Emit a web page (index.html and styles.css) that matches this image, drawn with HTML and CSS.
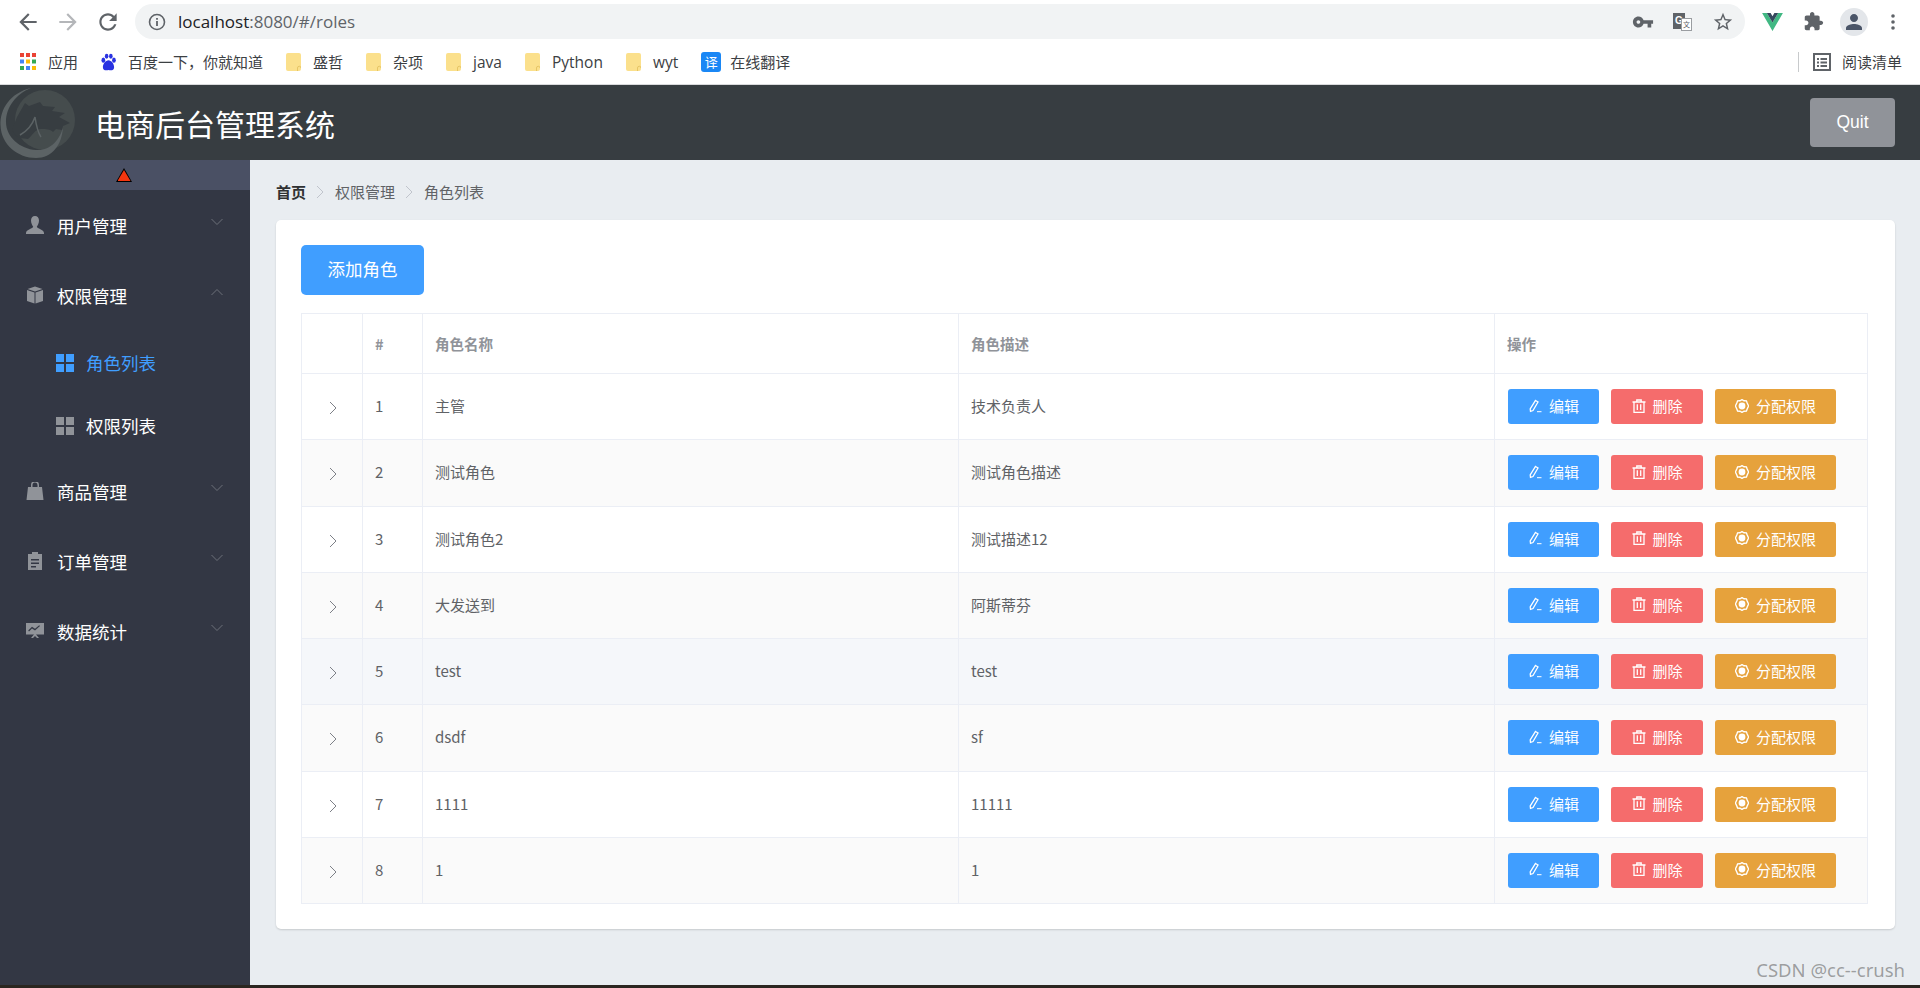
FILE: index.html
```html
<!DOCTYPE html>
<html lang="en">
<head>
    <meta charset="UTF-8">
    <meta name="viewport" content="width=device-width, initial-scale=1.0">
    <title>电商后台管理系统</title>
    <link rel="stylesheet" href="styles.css">
</head>
<body>

<svg class="sprite" aria-hidden="true">
    <symbol id="i-folder" viewBox="0 0 15 18"><path d="M2 0h11a2 2 0 0 1 2 2v14a2 2 0 0 1-2 2H2a2 2 0 0 1-2-2V2a2 2 0 0 1 2-2z" fill="#fbe08c"/><path d="M11.500 18v-3a1.700 1.700 0 0 1 3.500 0" fill="none" stroke="#e6c565"/></symbol>
    <symbol id="i-down" viewBox="0 0 12 8"><path d="M.5 1l5.500 5.500L11.500 1" fill="none" stroke="#6d7079" stroke-width="1"/></symbol>
    <symbol id="i-up" viewBox="0 0 12 8"><path d="M.5 7L6 1.500 11.500 7" fill="none" stroke="#6d7079" stroke-width="1"/></symbol>
    <symbol id="i-grid" viewBox="0 0 18 18"><path d="M0 0h8v8H0zM10 0h8v8h-8zM0 10h8v8H0zM10 10h8v8h-8z" fill="currentColor"/></symbol>
    <symbol id="i-right" viewBox="0 0 8 14"><path d="M1 1l6 6-6 6" fill="none" stroke="currentColor"/></symbol>
    <symbol id="i-edit" viewBox="0 0 14 14"><path d="M7.500 1.500l2.500 1.500-5 8.500-2.500.8-.3-2.500z" fill="none" stroke="#fff" stroke-width="1.300"/><path d="M9 12.700h4.500" stroke="#fff"/></symbol>
    <symbol id="i-trash" viewBox="0 0 14 14"><path d="M.5 3h13M4.800 3V1h4.400v2M2 3v10.300h10V3M5.300 5.300v5.700M8.700 5.300v5.700" fill="none" stroke="#fff" stroke-width="1.300"/></symbol>
    <symbol id="i-gear" viewBox="0 0 14 14"><path d="M7 .6l2 1.200 2.400.1.800 2.100L13.600 7l-1.400 3-.8 2.100-2.400.1L7 13.400l-2-1.200-2.400-.1-.8-2.100L.4 7l1.400-3 .8-2.100 2.400-.1z" fill="none" stroke="#fff" stroke-width="1.400"/><circle cx="7" cy="7" r="3.400" fill="#fff"/></symbol>
</svg>

<div class="browser-bar">
    <div class="nav-row">
        <svg class="nav-icon" viewBox="0 0 24 24"><path d="M20 11H7.830l5.590-5.590L12 4l-8 8 8 8 1.410-1.410L7.830 13H20v-2z" fill="#5f6368"/></svg>
        <svg class="nav-icon" viewBox="0 0 24 24"><path d="M4 11h12.170l-5.590-5.590L12 4l8 8-8 8-1.410-1.410L16.170 13H4v-2z" fill="#b4b6b9"/></svg>
        <svg class="nav-icon" viewBox="0 0 24 24"><path d="M17.650 6.350C16.200 4.900 14.210 4 12 4c-4.420 0-7.990 3.580-7.990 8s3.570 8 7.990 8c3.730 0 6.840-2.550 7.730-6h-2.080c-.82 2.330-3.040 4-5.650 4-3.310 0-6-2.690-6-6s2.690-6 6-6c1.660 0 3.140.69 4.220 1.780L13 11h7V4l-2.350 2.350z" fill="#5f6368"/></svg>
        <div class="url-pill">
            <svg class="info-icon" viewBox="0 0 18 18"><circle cx="9" cy="9" r="7.500" fill="none" stroke="#5f6368" stroke-width="1.600"/><path d="M8.100 8h1.800v5H8.100zM8.100 5h1.800v1.800H8.100z" fill="#5f6368"/></svg>
            <span class="url-text">localhost<span class="url-dim">:8080/#/roles</span></span>
            <svg class="pill-icon key" viewBox="0 0 24 24"><path d="M12.650 10C11.830 7.670 9.610 6 7 6c-3.310 0-6 2.690-6 6s2.690 6 6 6c2.610 0 4.830-1.670 5.650-4H17v4h4v-4h2v-4H12.650zM7 14c-1.100 0-2-.9-2-2s.9-2 2-2 2 .9 2 2-.9 2-2 2z" fill="#5f6368"/></svg>
            <div class="translate-icon"><span class="g-box">G</span><span class="x-box">文</span></div>
            <svg class="pill-icon star" viewBox="0 0 24 24"><path d="M22 9.240l-7.190-.62L12 2 9.190 8.630 2 9.240l5.460 4.730L5.820 21 12 17.270 18.180 21l-1.630-7.030L22 9.240zM12 15.400l-3.760 2.270 1-4.280-3.320-2.880 4.380-.38L12 6.100l1.710 4.040 4.380.38-3.320 2.880 1 4.280L12 15.400z" fill="#5f6368"/></svg>
        </div>
        <svg class="vue-icon" viewBox="0 0 22 19"><path d="M0 0h5l6 10L17 0h5L11 19z" fill="#41b883"/><path d="M5 0h4l2 3.500L13 0h4l-6 10z" fill="#35495e"/></svg>
        <svg class="puzzle-icon" viewBox="0 0 24 24"><path d="M20.500 11H19V7c0-1.100-.9-2-2-2h-4V3.500C13 2.120 11.880 1 10.500 1S8 2.120 8 3.500V5H4c-1.100 0-1.990.9-1.990 2v3.800H3.500c1.490 0 2.700 1.210 2.700 2.700s-1.210 2.700-2.700 2.700H2V20c0 1.100.9 2 2 2h3.800v-1.500c0-1.490 1.210-2.700 2.700-2.700 1.490 0 2.700 1.210 2.700 2.700V22H17c1.100 0 2-.9 2-2v-4h1.500c1.380 0 2.500-1.120 2.500-2.500S21.880 11 20.500 11z" fill="#5f6368"/></svg>
        <div class="avatar">
            <svg viewBox="0 0 24 24"><path d="M12 12c2.210 0 4-1.790 4-4s-1.790-4-4-4-4 1.790-4 4 1.790 4 4 4zm0 2c-2.670 0-8 1.340-8 4v2h16v-2c0-2.660-5.330-4-8-4z" fill="#4a5568"/></svg>
        </div>
        <svg class="dots-icon" viewBox="0 0 4 18"><circle cx="2" cy="3" r="1.800" fill="#5f6368"/><circle cx="2" cy="9" r="1.800" fill="#5f6368"/><circle cx="2" cy="15" r="1.800" fill="#5f6368"/></svg>
    </div>
    <div class="bookmark-row">
        <div class="bookmark">
            <svg class="apps-icon" viewBox="0 0 16 17">
                <path d="M0 0h4v4H0z" fill="#ea4335"/><path d="M6 0h4v4H6z" fill="#ea4335"/><path d="M12 0h4v4h-4z" fill="#ea4335"/>
                <path d="M0 6.500h4v4H0z" fill="#4285f4"/><path d="M6 6.500h4v4H6z" fill="#fbbc05"/><path d="M12 6.500h4v4h-4z" fill="#34a853"/>
                <path d="M0 13h4v4H0z" fill="#34a853"/><path d="M6 13h4v4H6z" fill="#4285f4"/><path d="M12 13h4v4h-4z" fill="#fbbc05"/>
            </svg>
            <span>应用</span>
        </div>
        <div class="bookmark">
            <svg class="paw-icon" viewBox="0 0 16 18" fill="#2932e1"><ellipse cx="2.500" cy="7" rx="2" ry="2.700"/><ellipse cx="6" cy="2.800" rx="1.900" ry="2.600"/><ellipse cx="10.500" cy="2.800" rx="1.900" ry="2.600"/><ellipse cx="13.800" cy="7" rx="2" ry="2.700"/><path d="M8 7c3 0 6 4 6 7.500 0 4-4 3.500-6 3-2 .5-6 1-6-3C2 11 5 7 8 7z"/></svg>
            <span>百度一下，你就知道</span>
        </div>
        <div class="bookmark"><svg class="folder-icon"><use href="#i-folder"/></svg><span>盛哲</span></div>
        <div class="bookmark"><svg class="folder-icon"><use href="#i-folder"/></svg><span>杂项</span></div>
        <div class="bookmark"><svg class="folder-icon"><use href="#i-folder"/></svg><span class="latin">java</span></div>
        <div class="bookmark"><svg class="folder-icon"><use href="#i-folder"/></svg><span class="latin">Python</span></div>
        <div class="bookmark"><svg class="folder-icon"><use href="#i-folder"/></svg><span class="latin">wyt</span></div>
        <div class="bookmark">
            <div class="fanyi-icon">译</div>
            <span>在线翻译</span>
        </div>
        <div class="reading-list">
            <svg class="list-icon" viewBox="0 0 18 18"><rect x="1" y="1" width="16" height="16" fill="none" stroke="#5f6368" stroke-width="2"/><path d="M4 5h2v2H4zM7.500 5H14v2H7.500zM4 8.500h2v2H4zM7.500 8.500H14v2H7.500zM4 12h2v2H4zM7.500 12H14v2H7.500z" fill="#5f6368"/></svg>
            <span>阅读清单</span>
        </div>
    </div>
</div>

<header class="app-header">
    <svg class="logo" viewBox="0 0 76 75">
        <circle cx="45" cy="35" r="30" fill="#454c4d"/>
        <path d="M31 3C10 8 0 24 .5 40 1 60 18 73 36 73c16 0 26-13 27-31-3 13-13 24-27 23C20 64 6 52 6 37 6 22 16 9 31 3z" fill="#5c6365"/>
        <path d="M12 45l5-13 8-14 4 3 11-4 3 4 12 1-3 4 13 2-6 4 11 6-7 3-1 4-6-1-3 3c-3-3-7-3-12-3-6 0-9 7-13 10l-8-1c-3-1-5-3-8-8z" fill="#373d41"/>
        <path d="M20 50c7-4 12-9 15-18 1 7 2 14 6 20" fill="none" stroke="#5c6365" stroke-width="1.500"/>
    </svg>
    <h1 class="app-title">电商后台管理系统</h1>
    <button class="quit-btn">Quit</button>
</header>

<div class="app-body">
    <aside class="sidebar">
        <div class="toggle-bar"><span class="toggle-arrow"></span></div>
        <ul class="menu">
            <li class="menu-item">
                <svg class="menu-icon" viewBox="0 0 18 18"><path d="M9 0c2.500 0 4 2 4 4.500S11.500 10 10.800 10.800c0 1.500 7.200 3 7.200 6.200v1H0v-1c0-3.200 7.200-4.700 7.200-6.200C6.500 10 5 7 5 4.500S6.500 0 9 0z"/></svg>
                <span class="menu-text">用户管理</span>
                <svg class="menu-arrow"><use href="#i-down"/></svg>
            </li>
            <li class="menu-item">
                <svg class="menu-icon" viewBox="0 0 18 18"><path d="M9 .5l7.500 2.500L9 5.500 1.500 3zM1 4l7.500 2.500V17.500L1 15zM17 4L9.500 6.500V17.500L17 15z"/></svg>
                <span class="menu-text">权限管理</span>
                <svg class="menu-arrow"><use href="#i-up"/></svg>
            </li>
            <li class="sub-item active">
                <svg class="sub-icon"><use href="#i-grid"/></svg>
                <span>角色列表</span>
            </li>
            <li class="sub-item">
                <svg class="sub-icon"><use href="#i-grid"/></svg>
                <span>权限列表</span>
            </li>
            <li class="menu-item">
                <svg class="menu-icon" viewBox="0 0 18 18"><path d="M5 5V3a4 4 0 0 1 8 0v2h3l1.500 13H.5L2 5zm1.500 0h5V3a2.500 2.500 0 0 0-5 0z"/></svg>
                <span class="menu-text">商品管理</span>
                <svg class="menu-arrow"><use href="#i-down"/></svg>
            </li>
            <li class="menu-item">
                <svg class="menu-icon" viewBox="0 0 18 18"><path d="M6 2V0h6v2h4v16H2V2zM5 7v1.500h8V7zm0 3.500V12h8v-1.500zM5 14v1.500h5V14z"/></svg>
                <span class="menu-text">订单管理</span>
                <svg class="menu-arrow"><use href="#i-down"/></svg>
            </li>
            <li class="menu-item">
                <svg class="menu-icon" viewBox="0 0 18 18"><path d="M0 1h18v11.500H10l3 3.500h-2l-2-2-2 2H5l3-3.500H0zM3 9.500l3-3 3 2 5-4.500-.8-.8L9 6.800l-3-2-3.800 3.800z" fill-rule="evenodd"/></svg>
                <span class="menu-text">数据统计</span>
                <svg class="menu-arrow"><use href="#i-down"/></svg>
            </li>
        </ul>
    </aside>

    <main class="main">
        <div class="breadcrumb">
            <span class="crumb-home">首页</span>
            <svg class="crumb-sep"><use href="#i-right"/></svg>
            <span>权限管理</span>
            <svg class="crumb-sep"><use href="#i-right"/></svg>
            <span>角色列表</span>
        </div>

        <section class="card">
            <button class="add-btn">添加角色</button>
            <table class="role-table">
                <colgroup>
                    <col class="col-expand">
                    <col class="col-index">
                    <col class="col-text">
                    <col class="col-text">
                    <col>
                </colgroup>
                <thead>
                    <tr><th></th><th>#</th><th>角色名称</th><th>角色描述</th><th>操作</th></tr>
                </thead>
                <tbody>
                    <tr>
                        <td class="expand"><svg class="row-arrow"><use href="#i-right"/></svg></td>
                        <td>1</td><td>主管</td><td>技术负责人</td>
                        <td class="action-cell"><div class="actions">
                            <button class="act blue"><svg><use href="#i-edit"/></svg>编辑</button>
                            <button class="act red"><svg><use href="#i-trash"/></svg>删除</button>
                            <button class="act orange"><svg><use href="#i-gear"/></svg>分配权限</button>
                        </div></td>
                    </tr>
                    <tr>
                        <td class="expand"><svg class="row-arrow"><use href="#i-right"/></svg></td>
                        <td>2</td><td>测试角色</td><td>测试角色描述</td>
                        <td class="action-cell"><div class="actions">
                            <button class="act blue"><svg><use href="#i-edit"/></svg>编辑</button>
                            <button class="act red"><svg><use href="#i-trash"/></svg>删除</button>
                            <button class="act orange"><svg><use href="#i-gear"/></svg>分配权限</button>
                        </div></td>
                    </tr>
                    <tr>
                        <td class="expand"><svg class="row-arrow"><use href="#i-right"/></svg></td>
                        <td>3</td><td>测试角色2</td><td>测试描述12</td>
                        <td class="action-cell"><div class="actions">
                            <button class="act blue"><svg><use href="#i-edit"/></svg>编辑</button>
                            <button class="act red"><svg><use href="#i-trash"/></svg>删除</button>
                            <button class="act orange"><svg><use href="#i-gear"/></svg>分配权限</button>
                        </div></td>
                    </tr>
                    <tr>
                        <td class="expand"><svg class="row-arrow"><use href="#i-right"/></svg></td>
                        <td>4</td><td>大发送到</td><td>阿斯蒂芬</td>
                        <td class="action-cell"><div class="actions">
                            <button class="act blue"><svg><use href="#i-edit"/></svg>编辑</button>
                            <button class="act red"><svg><use href="#i-trash"/></svg>删除</button>
                            <button class="act orange"><svg><use href="#i-gear"/></svg>分配权限</button>
                        </div></td>
                    </tr>
                    <tr class="hover">
                        <td class="expand"><svg class="row-arrow"><use href="#i-right"/></svg></td>
                        <td>5</td><td>test</td><td>test</td>
                        <td class="action-cell"><div class="actions">
                            <button class="act blue"><svg><use href="#i-edit"/></svg>编辑</button>
                            <button class="act red"><svg><use href="#i-trash"/></svg>删除</button>
                            <button class="act orange"><svg><use href="#i-gear"/></svg>分配权限</button>
                        </div></td>
                    </tr>
                    <tr>
                        <td class="expand"><svg class="row-arrow"><use href="#i-right"/></svg></td>
                        <td>6</td><td>dsdf</td><td>sf</td>
                        <td class="action-cell"><div class="actions">
                            <button class="act blue"><svg><use href="#i-edit"/></svg>编辑</button>
                            <button class="act red"><svg><use href="#i-trash"/></svg>删除</button>
                            <button class="act orange"><svg><use href="#i-gear"/></svg>分配权限</button>
                        </div></td>
                    </tr>
                    <tr>
                        <td class="expand"><svg class="row-arrow"><use href="#i-right"/></svg></td>
                        <td>7</td><td>1111</td><td>11111</td>
                        <td class="action-cell"><div class="actions">
                            <button class="act blue"><svg><use href="#i-edit"/></svg>编辑</button>
                            <button class="act red"><svg><use href="#i-trash"/></svg>删除</button>
                            <button class="act orange"><svg><use href="#i-gear"/></svg>分配权限</button>
                        </div></td>
                    </tr>
                    <tr>
                        <td class="expand"><svg class="row-arrow"><use href="#i-right"/></svg></td>
                        <td>8</td><td>1</td><td>1</td>
                        <td class="action-cell"><div class="actions">
                            <button class="act blue"><svg><use href="#i-edit"/></svg>编辑</button>
                            <button class="act red"><svg><use href="#i-trash"/></svg>删除</button>
                            <button class="act orange"><svg><use href="#i-gear"/></svg>分配权限</button>
                        </div></td>
                    </tr>
                </tbody>
            </table>
        </section>
    </main>
</div>

<div class="taskbar-edge"></div>
<div class="watermark">CSDN @cc--crush</div>

</body>
</html>
```

FILE: styles.css
```css
* {
    box-sizing: border-box;
}

html, body {
    margin: 0;
    height: 988px;
    overflow: hidden;
}

body {
    position: relative;
    display: flex;
    flex-direction: column;
    font-family: "Liberation Sans", "Noto Sans CJK SC", sans-serif;
    background: #e9edf1;
}

.sprite {
    display: none;
}

/* browser chrome */
.browser-bar {
    height: 85px;
    flex-shrink: 0;
    background: #fff;
    border-bottom: 1px solid #d9dadc;
}

.nav-row {
    display: flex;
    align-items: center;
    height: 42px;
    padding: 1px 0 0 15px;
}

.nav-icon {
    width: 26px;
    height: 26px;
    margin-right: 14px;
    flex-shrink: 0;
}

.url-pill {
    display: flex;
    align-items: center;
    width: 1610px;
    height: 35px;
    margin-left: 0;
    padding-left: 13px;
    background: #f1f3f4;
    border-radius: 18px;
}

.info-icon {
    width: 18px;
    height: 18px;
}

.url-text {
    margin-left: 12px;
    font-family: "Open Sans", sans-serif;
    font-size: 17px;
    color: #202124;
}

.url-dim {
    color: #5f6368;
}

.pill-icon {
    width: 22px;
    height: 22px;
}

.key {
    margin-left: auto;
}

.translate-icon {
    position: relative;
    width: 19px;
    height: 18px;
    margin: 0 20px 0 19px;
    font-size: 10px;
    font-weight: bold;
}

.g-box {
    position: absolute;
    left: 0;
    top: 0;
    width: 12px;
    height: 16px;
    background: #5f6368;
    color: #fff;
    text-align: center;
    line-height: 16px;
}

.x-box {
    position: absolute;
    right: 0;
    bottom: 0;
    width: 11px;
    height: 13px;
    background: #fff;
    border: 1px solid #9a9da1;
    color: #5f6368;
    font-size: 7px;
    font-weight: normal;
    text-align: center;
    line-height: 11px;
}

.star {
    margin-right: 11px;
}

.vue-icon {
    width: 21px;
    height: 18px;
    margin-left: 17px;
}

.puzzle-icon {
    width: 21px;
    height: 21px;
    margin-left: 20px;
}

.avatar {
    display: flex;
    align-items: center;
    justify-content: center;
    width: 28px;
    height: 28px;
    margin-left: 16px;
    background: #e3e6ea;
    border-radius: 50%;
}

.avatar svg {
    width: 24px;
    height: 24px;
}

.dots-icon {
    width: 4px;
    height: 18px;
    margin-left: 23px;
}

.bookmark-row {
    display: flex;
    align-items: center;
    height: 42px;
    padding: 0 0 3px 20px;
    font-family: "Open Sans", "Noto Sans CJK SC", sans-serif;
    font-size: 15px;
    color: #3c4043;
}

.bookmark {
    display: flex;
    align-items: center;
    gap: 12px;
    margin-right: 23px;
}

.latin {
    font-size: 15.500px;
}

.apps-icon {
    width: 16px;
    height: 17px;
}

.paw-icon {
    width: 15px;
    height: 18px;
}

.folder-icon {
    width: 15px;
    height: 18px;
}

.fanyi-icon {
    width: 20px;
    height: 20px;
    margin-right: -3px;
    background: #1a87f5;
    border-radius: 3px;
    color: #fff;
    font-size: 13px;
    line-height: 20px;
    text-align: center;
}

.reading-list {
    display: flex;
    align-items: center;
    margin-left: auto;
    margin-right: 18px;
    padding-left: 14px;
    border-left: 1px solid #c8cacc;
    height: 20px;
}

.list-icon {
    width: 18px;
    height: 18px;
    margin-right: 11px;
}

/* app header */
.app-header {
    display: flex;
    align-items: center;
    height: 75px;
    flex-shrink: 0;
    padding-right: 25px;
    background: #373d41;
}

.logo {
    width: 76px;
    height: 75px;
}

.app-title {
    margin: 0 0 0 19px;
    font-family: "Noto Sans CJK SC", sans-serif;
    font-size: 30px;
    font-weight: normal;
    color: #fff;
}

.quit-btn {
    width: 85px;
    height: 49px;
    margin-left: auto;
    padding: 0;
    border: 0;
    border-radius: 4px;
    background: #909399;
    color: #fff;
    font-family: "Liberation Sans", sans-serif;
    font-size: 17.500px;
}

.app-body {
    display: flex;
    flex: 1;
    min-height: 0;
}

/* sidebar */
.sidebar {
    width: 250px;
    flex-shrink: 0;
    background: #333744;
    font-family: "Noto Sans CJK SC", sans-serif;
    font-size: 17.500px;
    color: #fff;
}

.toggle-bar {
    display: flex;
    align-items: center;
    justify-content: center;
    height: 30px;
    padding-right: 2px;
    background: #4a5064;
}

.toggle-arrow {
    width: 16px;
    height: 14px;
    background: #000;
    clip-path: polygon(50% 0, 100% 100%, 0 100%);
    position: relative;
}

.toggle-arrow::after {
    content: "";
    position: absolute;
    left: 1.500px;
    top: 2px;
    width: 13px;
    height: 11px;
    background: #f5360f;
    clip-path: polygon(50% 0, 100% 100%, 0 100%);
}

.menu {
    margin: 0;
    padding: 0;
    list-style: none;
}

.menu-item {
    display: flex;
    align-items: center;
    height: 70px;
    padding-left: 26px;
}

.menu-icon {
    width: 18px;
    height: 18px;
    fill: #909399;
    flex-shrink: 0;
}

.menu-text {
    margin-left: 13px;
}

.menu-arrow {
    width: 12px;
    height: 8px;
    margin-left: auto;
    margin-right: 27px;
    margin-bottom: 6px;
}

.sub-item {
    display: flex;
    align-items: center;
    gap: 12px;
    height: 63px;
    padding-top: 2px;
    padding-left: 56px;
}

.sub-icon {
    width: 18px;
    height: 18px;
    color: #909399;
}

.sub-item.active,
.sub-item.active .sub-icon {
    color: #409eff;
}

/* main */
.main {
    flex: 1;
    min-width: 0;
    padding: 24px 25px 0 26px;
    font-family: "Noto Sans CJK SC", sans-serif;
}

.breadcrumb {
    display: flex;
    align-items: center;
    height: 15px;
    margin-bottom: 21px;
    font-size: 15px;
    color: #606266;
}

.crumb-home {
    font-weight: bold;
    color: #303133;
}

.crumb-sep {
    width: 8px;
    height: 14px;
    margin: 0 11px 0 10px;
    color: #c0c4cc;
}

.card {
    height: 709px;
    padding: 25px;
    background: #fff;
    border-radius: 5px;
    box-shadow: 0 1px 2px rgba(0, 0, 0, 0.15);
}

.add-btn {
    display: block;
    width: 123px;
    height: 50px;
    margin-bottom: 18px;
    padding: 0 0 3px;
    border: 0;
    border-radius: 5px;
    background: #409eff;
    color: #fff;
    font-family: "Noto Sans CJK SC", sans-serif;
    font-size: 17.500px;
}

.role-table {
    width: 1567px;
    border-collapse: collapse;
    table-layout: fixed;
    font-size: 15px;
    color: #606266;
}

.col-expand {
    width: 61px;
}

.col-index {
    width: 60px;
}

.col-text {
    width: 536px;
}

.role-table th,
.role-table td {
    padding: 0 0 2px 12px;
    border: 1px solid #ebeef5;
    text-align: left;
}

.role-table th {
    height: 60px;
    padding-bottom: 0;
    font-size: 14.500px;
    color: #909399;
}

.role-table td {
    height: 66.250px;
}

.role-table tbody tr:nth-child(even) {
    background: #fafafa;
}

.role-table tbody tr.hover {
    background: #f5f7fa;
}

.role-table td.expand {
    padding: 0 0 0 2px;
    text-align: center;
}

.role-table td.action-cell {
    padding-bottom: 0;
    padding-left: 13px;
}

.row-arrow {
    display: block;
    width: 8px;
    height: 14px;
    margin: 3px auto 0;
    color: #7d8087;
}

.actions {
    display: flex;
    gap: 12px;
}

.act {
    display: flex;
    align-items: center;
    justify-content: center;
    gap: 7px;
    height: 35px;
    padding: 0 20px 2px;
    border: 0;
    border-radius: 3px;
    color: #fff;
    font-family: "Noto Sans CJK SC", sans-serif;
    font-size: 15px;
}

.act svg {
    width: 14px;
    height: 14px;
}

.blue {
    background: #409eff;
}

.red {
    width: 92px;
    background: #f56c6c;
}

.orange {
    background: #e6a23c;
}

.taskbar-edge {
    height: 3px;
    flex-shrink: 0;
    background: #2b2620;
}

.watermark {
    position: absolute;
    right: 15px;
    bottom: 6px;
    font-family: "Noto Sans", sans-serif;
    font-size: 18.500px;
    color: rgba(90, 90, 90, 0.55);
}
```
